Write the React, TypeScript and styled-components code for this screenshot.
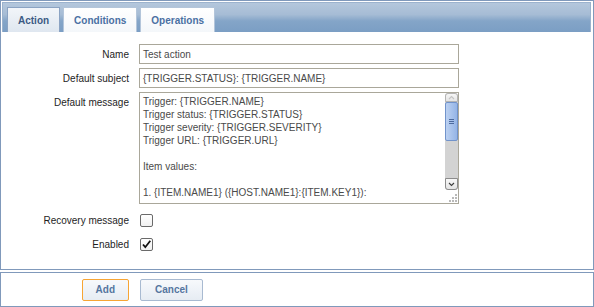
import React from "react";
import styled, { createGlobalStyle } from "styled-components";

const Global = createGlobalStyle`
  html, body { margin: 0; padding: 0; background: #ffffff; }
  body {
    font-family: "Liberation Sans", Arial, sans-serif;
    font-size: 10px;
    color: #1e1e1e;
  }
  * { box-sizing: border-box; }
`;

const Page = styled.div`
  width: 594px;
  display: flex;
  flex-direction: column;
  gap: 2px;
`;

const MainPanel = styled.div`
  height: 270px;
  border: 1px solid #8099bb;
  display: flex;
  flex-direction: column;
`;

const TabBar = styled.div`
  margin: 1px 2px 0 1px;
  height: 30px;
  padding: 0 0 0 4px;
  display: flex;
  align-items: flex-end;
  gap: 3px;
  border: 1px solid #9bb2cd;
  border-bottom: none;
  background: linear-gradient(#b4c7dc 0%, #a6bcd5 40%, #84a5c8 62%, #7b9ec4 100%);
`;

const Tab = styled.div<{ $active?: boolean }>`
  height: 25px;
  padding: 0 10px;
  display: flex;
  align-items: center;
  font-weight: bold;
  font-size: 10px;
  border: 1px solid ${(p) => (p.$active ? "#8ba3c3" : "#b3c5da")};
  border-bottom: none;
  color: ${(p) => (p.$active ? "#3b5a84" : "#4a70a3")};
  background: ${(p) =>
    p.$active ? "linear-gradient(#f2f5f9, #dfe7f0)" : "linear-gradient(#ffffff, #f4f7fa)"};
`;

const FormGrid = styled.div`
  flex: 1;
  padding-top: 12px;
  display: grid;
  grid-template-columns: 128px 320px;
  column-gap: 10px;
  row-gap: 4px;
  align-content: start;
`;

const Label = styled.div<{ $top?: boolean }>`
  height: 20px;
  display: flex;
  align-items: center;
  justify-content: flex-end;
  align-self: ${(p) => (p.$top ? "start" : "center")};
  white-space: nowrap;
  color: #1e1e1e;
`;

const TextInput = styled.div`
  height: 20px;
  border: 1px solid #aaa79a;
  padding: 0 3px;
  display: flex;
  align-items: center;
  color: #4a4a4a;
  white-space: nowrap;
  overflow: hidden;
`;

const TextAreaBox = styled.div`
  height: 112px;
  margin-bottom: 2px;
  border: 1px solid #aaa79a;
  display: flex;
  overflow: hidden;
`;

const TextAreaContent = styled.div`
  flex: 1;
  padding: 2px 3px;
  line-height: 13px;
  color: #4a4a4a;
  white-space: pre;
  overflow: hidden;
`;

const ScrollColumn = styled.div`
  width: 13px;
  display: flex;
  flex-direction: column;
`;

const ScrollTrack = styled.div`
  flex: 1;
  display: flex;
  flex-direction: column;
  background: #d3d3d3;
  border-radius: 3px;
`;

const ScrollButton = styled.div<{ $down?: boolean }>`
  height: ${(p) => (p.$down ? "12px" : "9px")};
  border: 1px solid ${(p) => (p.$down ? "#8c8c8c" : "#b4b4b4")};
  border-radius: ${(p) => (p.$down ? "0 0 3px 3px" : "3px 3px 0 0")};
  background: linear-gradient(#f7f7f7, #e4e4e4);
  display: flex;
  align-items: center;
  justify-content: center;
`;

const ScrollThumb = styled.div`
  height: 39px;
  border: 1px solid #7193cb;
  border-radius: 2px;
  background: linear-gradient(to right, #bcd1f1, #94b4e6);
  display: flex;
  align-items: center;
  justify-content: center;
`;

const ScrollGap = styled.div`
  flex: 1;
`;

const ResizeCorner = styled.div`
  height: 13px;
  display: flex;
  align-items: flex-end;
  justify-content: flex-end;
  background: #ffffff;
`;

const CheckRow = styled.div`
  height: 20px;
  display: flex;
  align-items: center;
  padding-left: 1px;
`;

const CheckBox = styled.span`
  flex: 0 0 13px;
  width: 13px;
  height: 13px;
  border: 1px solid #6a6a6a;
  border-radius: 2px;
  background: linear-gradient(#ffffff, #f1f1f1);
  display: flex;
  align-items: center;
  justify-content: center;
`;

const ButtonPanel = styled.div`
  height: 35px;
  border: 1px solid #8099bb;
  display: grid;
  grid-template-columns: 128px 320px;
  column-gap: 10px;
  align-items: center;
`;

const Button = styled.button<{ $focused?: boolean }>`
  height: 22px;
  padding: 0 ${(p) => (p.$focused ? "13px" : "14px")};
  font-family: "Liberation Sans", Arial, sans-serif;
  font-size: 10px;
  font-weight: bold;
  color: #55769f;
  border: 1px solid ${(p) => (p.$focused ? "#f7a534" : "#a8bad1")};
  border-radius: 2px;
  background: linear-gradient(#f7f9fc, #e6ecf3);
  justify-self: ${(p) => (p.$focused ? "end" : "start")};
  margin-left: ${(p) => (p.$focused ? "0" : "1px")};
`;

const Chevron = ({ down }: { down?: boolean }) => (
  <svg width="7" height="5" viewBox="0 0 7 5">
    <path
      d={down ? "M1 1 L3.5 3.5 L6 1" : "M1 4 L3.5 1.5 L6 4"}
      fill="none"
      stroke={down ? "#3c3c3c" : "#c4c4c4"}
      strokeWidth="1.1"
    />
  </svg>
);

const Grip = () => (
  <svg width="5" height="5" viewBox="0 0 5 5">
    <rect x="0" y="0" width="5" height="1" fill="#4c6a9e" />
    <rect x="0" y="2" width="5" height="1" fill="#4c6a9e" />
    <rect x="0" y="4" width="5" height="1" fill="#4c6a9e" />
  </svg>
);

const Dots = () => (
  <svg width="11" height="11" viewBox="0 0 11 11">
    {[
      [8, 2],
      [5, 5],
      [8, 5],
      [2, 8],
      [5, 8],
      [8, 8],
    ].map(([x, y], i) => (
      <rect key={i} x={x} y={y} width="2" height="2" fill="#b9b9b9" />
    ))}
  </svg>
);

const CheckMark = () => (
  <svg width="11" height="11" viewBox="0 0 11 11">
    <path d="M2 5.5 L4.3 8.2 L9.3 1.8" fill="none" stroke="#111" strokeWidth="1.8" />
  </svg>
);

const message = [
  "Trigger: {TRIGGER.NAME}",
  "Trigger status: {TRIGGER.STATUS}",
  "Trigger severity: {TRIGGER.SEVERITY}",
  "Trigger URL: {TRIGGER.URL}",
  "",
  "Item values:",
  "",
  "1. {ITEM.NAME1} ({HOST.NAME1}:{ITEM.KEY1}):",
].join("\n");

export default function App() {
  return (
    <>
      <Global />
      <Page>
        <MainPanel>
          <TabBar>
            <Tab $active>Action</Tab>
            <Tab>Conditions</Tab>
            <Tab>Operations</Tab>
          </TabBar>
          <FormGrid>
            <Label>Name</Label>
            <TextInput>Test action</TextInput>

            <Label>Default subject</Label>
            <TextInput>{"{TRIGGER.STATUS}: {TRIGGER.NAME}"}</TextInput>

            <Label $top>Default message</Label>
            <TextAreaBox>
              <TextAreaContent>{message}</TextAreaContent>
              <ScrollColumn>
                <ScrollTrack>
                  <ScrollButton>
                    <Chevron />
                  </ScrollButton>
                  <ScrollThumb>
                    <Grip />
                  </ScrollThumb>
                  <ScrollGap />
                  <ScrollButton $down>
                    <Chevron down />
                  </ScrollButton>
                </ScrollTrack>
                <ResizeCorner>
                  <Dots />
                </ResizeCorner>
              </ScrollColumn>
            </TextAreaBox>

            <Label>Recovery message</Label>
            <CheckRow>
              <CheckBox />
            </CheckRow>

            <Label>Enabled</Label>
            <CheckRow>
              <CheckBox>
                <CheckMark />
              </CheckBox>
            </CheckRow>
          </FormGrid>
        </MainPanel>
        <ButtonPanel>
          <Button $focused>Add</Button>
          <Button>Cancel</Button>
        </ButtonPanel>
      </Page>
    </>
  );
}
